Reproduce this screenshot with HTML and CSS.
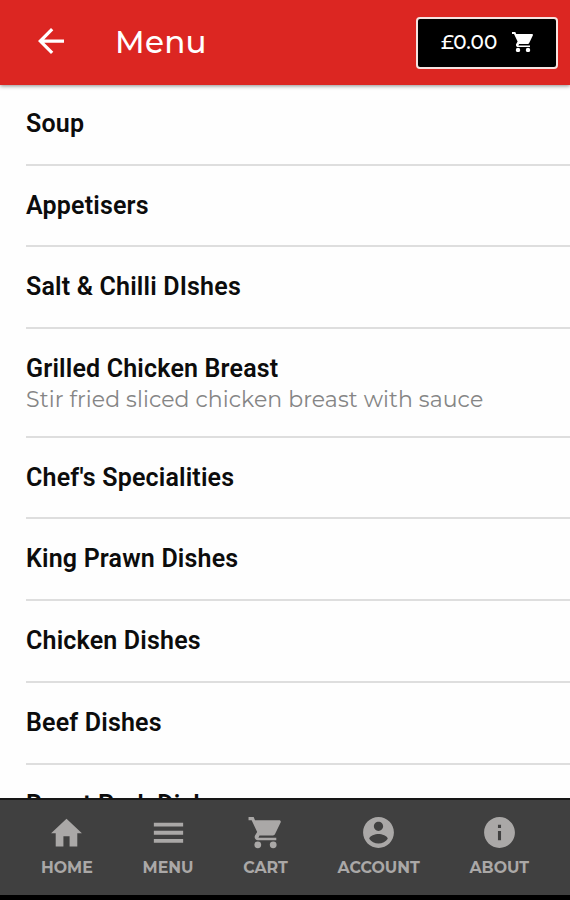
FILE: index.html
```html
<!DOCTYPE html>
<html lang="en">
<head>
    <meta charset="UTF-8">
    <meta name="viewport" content="width=device-width, initial-scale=1.0">
    <title>Menu</title>
    <link rel="stylesheet" href="styles.css">
</head>
<body>
    <header class="app-bar">
        <a href="#" class="back" aria-label="Back">
            <svg viewBox="4 4 16 16"><path d="M20 11H7.830l5.590-5.590L12 4l-8 8 8 8 1.410-1.410L7.830 13H20v-2z"/></svg>
        </a>
        <h1>Menu</h1>
        <button class="basket">
            <span class="total">£0.00</span>
            <svg viewBox="1 2 21 20"><path d="M1 2v2h2l3.600 7.600-1.400 2.400c-.7 1.300.3 3 1.800 3h12v-1.600H7.400l.7-1.400h8.400c.7 0 1.400-.4 1.700-1l3.600-7.500c.4-.7-.1-1.500-.9-1.500H5.200l-.9-2z"/><circle cx="7" cy="20" r="2.200"/><circle cx="17" cy="20" r="2.200"/></svg>
        </button>
    </header>

    <main class="categories">
        <div class="category"><h2>Soup</h2></div>
        <div class="category"><h2>Appetisers</h2></div>
        <div class="category"><h2>Salt &amp; Chilli DIshes</h2></div>
        <div class="category with-text">
            <h2>Grilled Chicken Breast</h2>
            <p>Stir fried sliced chicken breast with sauce</p>
        </div>
        <div class="category"><h2>Chef's Specialities</h2></div>
        <div class="category"><h2>King Prawn Dishes</h2></div>
        <div class="category"><h2>Chicken Dishes</h2></div>
        <div class="category"><h2>Beef Dishes</h2></div>
        <div class="category"><h2>Roast Pork Dishes</h2></div>
    </main>

    <nav class="tab-bar">
        <a href="#" class="tab">
            <svg viewBox="0 0 24 24"><path d="M10 21v-6.500h4V21h5v-8.500h3L12 3 2 12.500h3V21z"/></svg>
            <span>HOME</span>
        </a>
        <a href="#" class="tab">
            <svg viewBox="0 0 24 24"><path d="M2.500 5.600h19v2.500h-19zM2.500 10.900h19v2.500h-19zM2.500 16.200h19v2.500h-19z"/></svg>
            <span>MENU</span>
        </a>
        <a href="#" class="tab">
            <svg viewBox="0 0 24 24"><path d="M1 2v2h2l3.600 7.600-1.400 2.400c-.7 1.300.3 3 1.800 3h12v-1.600H7.400l.7-1.400h8.400c.7 0 1.400-.4 1.700-1l3.600-7.500c.4-.7-.1-1.500-.9-1.500H5.200l-.9-2z"/><circle cx="7" cy="20" r="2.200"/><circle cx="17" cy="20" r="2.200"/></svg>
            <span>CART</span>
        </a>
        <a href="#" class="tab">
            <svg viewBox="0 0 24 24"><path d="M12 2C6.480 2 2 6.480 2 12s4.480 10 10 10 10-4.480 10-10S17.520 2 12 2zm0 3c1.660 0 3 1.340 3 3s-1.340 3-3 3-3-1.340-3-3 1.340-3 3-3zm0 14.200c-2.500 0-4.710-1.280-6-3.220.03-1.990 4-3.080 6-3.080 1.990 0 5.970 1.090 6 3.080-1.290 1.940-3.500 3.220-6 3.220z"/></svg>
            <span>ACCOUNT</span>
        </a>
        <a href="#" class="tab">
            <svg viewBox="0 0 24 24"><path d="M12 2C6.480 2 2 6.480 2 12s4.480 10 10 10 10-4.480 10-10S17.520 2 12 2zm1 15h-2v-6h2v6zm0-8h-2V7h2v2z"/></svg>
            <span>ABOUT</span>
        </a>
    </nav>
</body>
</html>
```
FILE: styles.css
```css
* {
    box-sizing: border-box;
}

body {
    margin: 0;
    height: 900px;
    display: flex;
    flex-direction: column;
    overflow: hidden;
    background: #fefefe;
    font-family: Montserrat, Inter, sans-serif;
}

svg {
    display: block;
    fill: currentColor;
}

h1, h2, p {
    margin: 0;
}

/* Top bar */
.app-bar {
    flex: none;
    display: flex;
    align-items: center;
    height: 85px;
    padding: 0 12px 0 38px;
    background: #dc2622;
    color: #fff;
    box-shadow: 0 1px 4px rgba(0, 0, 0, 0.45);
    z-index: 1;
}

.back {
    color: #fff;
    margin-top: -3px;
}

.back svg {
    width: 26px;
    height: 26px;
}

.app-bar h1 {
    margin: -1px 0 0 51px;
    font-size: 31px;
    font-weight: 500;
    line-height: 40px;
    letter-spacing: 0.3px;
}

.basket {
    display: flex;
    align-items: center;
    justify-content: space-between;
    width: 142px;
    height: 52px;
    margin-left: auto;
    padding: 0 23px 2px 23px;
    background: #000;
    border: 2px solid #f5e3e1;
    border-radius: 4px;
    color: #fff;
    font-family: inherit;
    font-size: 20px;
    font-weight: 500;
}

.basket svg {
    width: 21px;
    height: 20px;
}

/* Category list */
.categories {
    flex: 1;
    min-height: 0;
    overflow: hidden;
    padding-left: 26px;
    margin-top: -1px;
}

.category {
    height: 81.7px;
    padding-top: 25px;
    border-bottom: 2px solid #dedede;
}

.with-text {
    height: 108.7px;
}

.category h2 {
    font-family: Roboto, sans-serif;
    font-size: 25px;
    font-weight: 600;
    line-height: 30px;
    letter-spacing: 0.18px;
    color: #0c0c0c;
}

.category p {
    margin-top: -1px;
    font-size: 22px;
    font-weight: 400;
    line-height: 33px;
    letter-spacing: 0.1px;
    color: #858585;
    white-space: nowrap;
}

/* Bottom tabs */
.tab-bar {
    flex: none;
    display: flex;
    justify-content: space-between;
    height: 102px;
    padding: 14px 41px 0 41px;
    background: #404040;
    border-top: 2px solid #161616;
    border-bottom: 5px solid #000;
}

.tab {
    display: flex;
    flex-direction: column;
    align-items: center;
    color: #aaa8a7;
    text-decoration: none;
    font-size: 15.8px;
    font-weight: 700;
    line-height: 20px;
}

.tab svg {
    width: 37px;
    height: 37px;
    margin-bottom: 7px;
}
```
